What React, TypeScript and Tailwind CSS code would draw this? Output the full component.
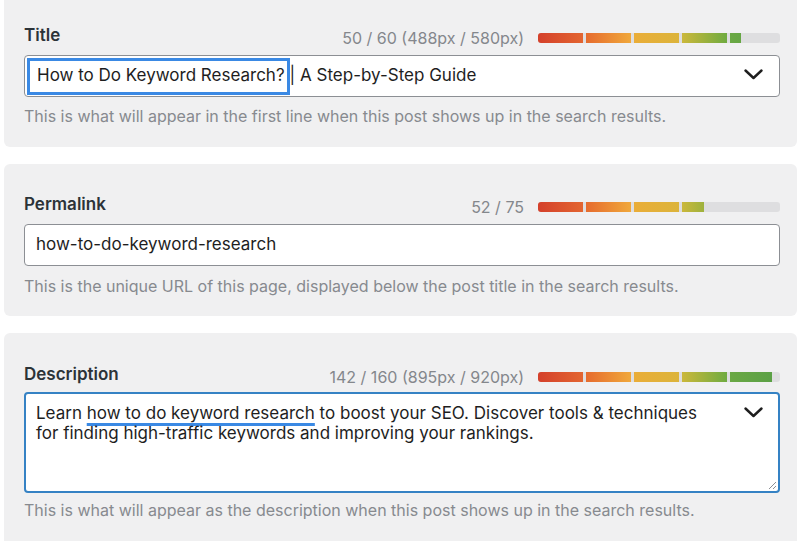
import React from "react";

type Seg = { w: number; from: string; to: string };

const SEGS: Seg[] = [
  { w: 45, from: "#d4402b", to: "#e36530" },
  { w: 45, from: "#e66b2e", to: "#f0a83b" },
  { w: 45, from: "#eaad38", to: "#dcb43b" },
  { w: 45, from: "#cbb83b", to: "#6fab40" },
  { w: 45, from: "#6aa844", to: "#5aa046" },
];

function Bar({ widths }: { widths: number[] }) {
  return (
    <div className="flex h-[10px] w-[242px] gap-[3px] overflow-hidden rounded-[3px] bg-[#dedee0]">
      {widths.map((w, i) => (
        <div
          key={i}
          className="h-full shrink-0 overflow-hidden"
          style={{ width: w }}
        >
          <div
            className="h-full w-[45px]"
            style={{
              background: `linear-gradient(to right, ${SEGS[i].from}, ${SEGS[i].to})`,
            }}
          />
        </div>
      ))}
    </div>
  );
}

function Chevron() {
  return (
    <svg width="19" height="11" viewBox="0 0 19 11" fill="none">
      <path
        d="M1.5 1.5 L9.5 9 L17.5 1.5"
        stroke="#1e1e1e"
        strokeWidth="2.4"
        strokeLinecap="round"
        strokeLinejoin="round"
      />
    </svg>
  );
}

function Header({
  label,
  counter,
  widths,
}: {
  label: string;
  counter: string;
  widths: number[];
}) {
  return (
    <div className="flex h-[24px] items-center">
      <div className="mb-[6px] text-[17px] font-semibold leading-[24px] text-[#2c3338]">
        {label}
      </div>
      <div className="ml-auto mr-[14px] text-[16px] leading-[24px] text-[#84878c]">
        {counter}
      </div>
      <Bar widths={widths} />
    </div>
  );
}

function Helper({ children }: { children: React.ReactNode }) {
  return (
    <div className="text-[16px] leading-[22px] text-[#878a8f]">{children}</div>
  );
}

export default function App() {
  return (
    <div className="h-[541px] w-[800px] overflow-hidden bg-white pl-[4px] pr-[3px] font-['Inter',sans-serif]">
      {/* Title panel */}
      <div className="-mt-[5px] rounded-[6px] bg-[#f0f0f1] pb-[20px] pl-[20px] pr-[17px] pt-[31px]">
        <Header
          label="Title"
          counter="50 / 60 (488px / 580px)"
          widths={[45, 45, 45, 45, 11]}
        />
        <div className="mt-[5px] flex h-[42px] items-center rounded-[4px] border border-[#8c8f94] bg-white pl-[2px] pr-[16px] text-[17px] text-[#1e1e1e]">
          <span className="flex h-[37px] items-center border-[3px] border-[#3a89e4] pl-[7px] pr-[2px]">
            How to Do Keyword Research?
          </span>
          <span className="whitespace-pre">| A Step-by-Step Guide</span>
          <span className="ml-auto mt-[-3px] flex">
            <Chevron />
          </span>
        </div>
        <div className="mt-[8px]">
          <Helper>
            This is what will appear in the first line when this post shows up
            in the search results.
          </Helper>
        </div>
      </div>

      {/* Permalink panel */}
      <div className="mt-[17px] rounded-[6px] bg-[#f0f0f1] pb-[19px] pl-[20px] pr-[17px] pt-[31px]">
        <Header label="Permalink" counter="52 / 75" widths={[45, 45, 45, 22]} />
        <div className="mt-[5px] flex h-[42px] items-center rounded-[4px] border border-[#8c8f94] bg-white pl-[11px] text-[17px] text-[#1e1e1e]">
          how-to-do-keyword-research
        </div>
        <div className="mt-[9px]">
          <Helper>
            This is the unique URL of this page, displayed below the post title
            in the search results.
          </Helper>
        </div>
      </div>

      {/* Description panel */}
      <div className="mt-[17px] rounded-[6px] bg-[#f0f0f1] pb-[40px] pl-[20px] pr-[17px] pt-[32px]">
        <Header
          label="Description"
          counter="142 / 160 (895px / 920px)"
          widths={[45, 45, 45, 45, 42]}
        />
        <div className="relative mt-[3px] flex h-[101px] rounded-[4px] border-2 border-[#3582c4] bg-white pl-[10px] pr-[15px] pt-[9px] text-[17px] leading-[20px] text-[#1e1e1e]">
          <div>
            Learn{" "}
            <span className="underline decoration-[#3a89e4] decoration-[3px] underline-offset-[4px] [text-decoration-skip-ink:none]">
              how to do keyword research
            </span>{" "}
            to boost your SEO. Discover tools &amp; techniques
            <br />
            for finding high-traffic keywords and improving your rankings.
          </div>
          <span className="ml-auto mt-[4px] flex h-[11px]">
            <Chevron />
          </span>
          <svg
            className="absolute bottom-[1px] right-[1px]"
            width="10"
            height="10"
            viewBox="0 0 10 10"
          >
            <path d="M9 2 L2 9 M9 6 L6 9" stroke="#8c8f94" strokeWidth="1" />
          </svg>
        </div>
        <div className="mt-[6px]">
          <Helper>
            This is what will appear as the description when this post shows up
            in the search results.
          </Helper>
        </div>
      </div>
    </div>
  );
}
